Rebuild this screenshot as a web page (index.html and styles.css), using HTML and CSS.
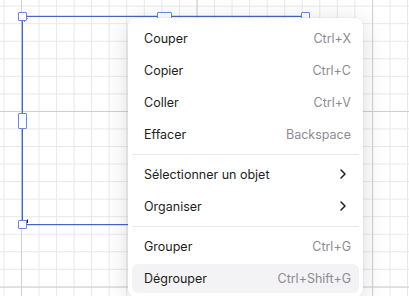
FILE: index.html
```html
<!doctype html>
<html>
  <head>
    <meta charset="UTF-8" />
    <title>Canvas</title>
    <link rel="stylesheet" href="styles.css">
  </head>
  <body>
    <div class="canvas">
      <div class="selection">
        <span class="corner-mark tl"></span>
        <span class="corner-mark bl"></span>
        <span class="handle h-tl"></span>
        <span class="handle h-tm"></span>
        <span class="handle h-tr"></span>
        <span class="handle h-ml"></span>
        <span class="handle h-bl"></span>
      </div>

      <div class="context-menu">
        <div class="menu-item"><span>Couper</span><span class="shortcut">Ctrl+X</span></div>
        <div class="menu-item"><span>Copier</span><span class="shortcut">Ctrl+C</span></div>
        <div class="menu-item"><span>Coller</span><span class="shortcut">Ctrl+V</span></div>
        <div class="menu-item"><span>Effacer</span><span class="shortcut">Backspace</span></div>
        <div class="menu-sep"></div>
        <div class="menu-item">
          <span>Sélectionner un objet</span>
          <svg class="chevron" viewBox="0 0 16 16" fill="none" stroke="currentColor" stroke-width="1.5" stroke-linecap="round" stroke-linejoin="round">
            <path d="m6 4 4 4-4 4" />
          </svg>
        </div>
        <div class="menu-item">
          <span>Organiser</span>
          <svg class="chevron" viewBox="0 0 16 16" fill="none" stroke="currentColor" stroke-width="1.5" stroke-linecap="round" stroke-linejoin="round">
            <path d="m6 4 4 4-4 4" />
          </svg>
        </div>
        <div class="menu-sep"></div>
        <div class="menu-item"><span>Grouper</span><span class="shortcut">Ctrl+G</span></div>
        <div class="menu-item active"><span>Dégrouper</span><span class="shortcut">Ctrl+Shift+G</span></div>
      </div>
    </div>
  </body>
</html>
```

FILE: styles.css
```css
html,
body {
  margin: 0;
  padding: 0;
  background-color: #fff;
}
.canvas {
  position: relative;
  width: 409px;
  height: 296px;
  overflow: hidden;
  background-color: #fff;
  background-image:
    linear-gradient(to right, #d0d0d0 1px, transparent 1px),
    linear-gradient(to bottom, #d0d0d0 1px, transparent 1px),
    linear-gradient(to right, #e8e8e8 1px, transparent 1px),
    linear-gradient(to bottom, #e8e8e8 1px, transparent 1px);
  background-size:
    175.6px 175.6px,
    175.6px 175.6px,
    17.56px 17.56px,
    17.56px 17.56px;
  background-position:
    21px 0,
    0 111px,
    3.44px 0,
    0 5.64px;
}
.selection {
  position: absolute;
  left: 22px;
  top: 16px;
  width: 282px;
  height: 207px;
  border: 1px solid #4565c4;
  box-shadow: 0 0 0 1px rgba(110, 145, 230, 0.3);
}
.handle {
  position: absolute;
  box-sizing: border-box;
  background: #fff;
  border: 1.5px solid #6688e6;
  border-radius: 1px;
}
.h-tl,
.h-tr,
.h-bl {
  width: 9px;
  height: 9px;
}
.h-tl {
  left: -5px;
  top: -5px;
}
.h-tr {
  right: -5px;
  top: -5px;
}
.h-bl {
  left: -5px;
  bottom: -5px;
}
.h-tm {
  width: 15px;
  height: 9px;
  left: 134px;
  top: -5px;
}
.h-ml {
  width: 9px;
  height: 16px;
  left: -5px;
  top: 96px;
}
.corner-mark {
  position: absolute;
  width: 0;
  height: 0;
}
.corner-mark.tl {
  left: 1px;
  top: 1px;
  border-top: 4px solid #1b1b2a;
  border-right: 4px solid transparent;
}
.corner-mark.bl {
  left: 1px;
  bottom: 1px;
  border-top: 4px solid transparent;
  border-left: 4px solid #1b1b2a;
  transform: rotate(-90deg);
}
.context-menu {
  position: absolute;
  left: 128px;
  top: 18px;
  width: 235px;
  padding: 4px;
  box-sizing: border-box;
  background: #fff;
  border-radius: 8px;
  box-shadow: 0 4px 24px rgba(0, 0, 0, 0.14), 0 0 0 1px rgba(0, 0, 0, 0.03);
  font-family: Inter, "Noto Sans", sans-serif;
  font-size: 12.5px;
  color: #1e1e22;
}
.menu-item {
  height: 32px;
  display: flex;
  align-items: center;
  justify-content: space-between;
  padding: 0 8px 0 12px;
  border-radius: 6px;
}
.menu-item.active {
  background-color: #f3f3f5;
  margin-top: 2px;
  height: 29px;
}
.shortcut {
  color: #8c8c92;
}
.chevron {
  width: 16px;
  height: 16px;
  color: #1e1e22;
}
.menu-sep {
  height: 1px;
  margin: 4px 0 3px;
  background-color: #e7e7ec;
}
```
